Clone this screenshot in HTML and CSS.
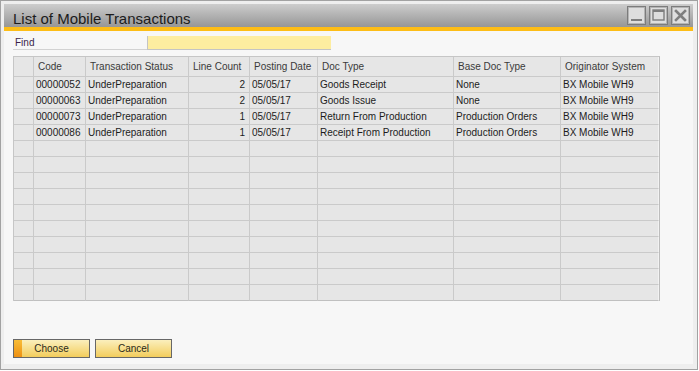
FILE: index.html
```html
<!DOCTYPE html>
<html>
<head>
<meta charset="utf-8">
<link rel="stylesheet" href="styles.css">
</head>
<body>
<div class="window">
  <div class="titlebar">
    <span class="title">List of Mobile Transactions</span>
    <div class="controls">
      <span class="ctl"><svg width="17" height="17" viewBox="0 0 17 17"><rect x="3" y="12" width="11" height="2" fill="#7e7e7e"/></svg></span>
      <span class="ctl"><svg width="17" height="17" viewBox="0 0 17 17"><rect x="3" y="3" width="11" height="10" fill="none" stroke="#7e7e7e" stroke-width="1.4"/><rect x="3" y="3" width="11" height="2" fill="#7e7e7e"/></svg></span>
      <span class="ctl"><svg width="17" height="17" viewBox="0 0 17 17"><path d="M4 4 L13 13 M13 4 L4 13" stroke="#7e7e7e" stroke-width="2.6" stroke-linecap="square"/></svg></span>
    </div>
  </div>
  <div class="content">
    <div class="find-row">
      <span class="find-label">Find</span>
      <span class="find-input"></span>
    </div>
    <table class="grid">
      <thead>
        <tr>
          <th class="c0"></th>
          <th class="c1">Code</th>
          <th class="c2">Transaction Status</th>
          <th class="c3">Line Count</th>
          <th class="c4">Posting Date</th>
          <th class="c5">Doc Type</th>
          <th class="c6">Base Doc Type</th>
          <th class="c7">Originator System</th>
        </tr>
      </thead>
      <tbody>
        <tr><td></td><td>00000052</td><td>UnderPreparation</td><td class="num">2</td><td>05/05/17</td><td>Goods Receipt</td><td>None</td><td>BX Mobile WH9</td></tr>
        <tr><td></td><td>00000063</td><td>UnderPreparation</td><td class="num">2</td><td>05/05/17</td><td>Goods Issue</td><td>None</td><td>BX Mobile WH9</td></tr>
        <tr><td></td><td>00000073</td><td>UnderPreparation</td><td class="num">1</td><td>05/05/17</td><td>Return From Production</td><td>Production Orders</td><td>BX Mobile WH9</td></tr>
        <tr><td></td><td>00000086</td><td>UnderPreparation</td><td class="num">1</td><td>05/05/17</td><td>Receipt From Production</td><td>Production Orders</td><td>BX Mobile WH9</td></tr>
        <tr><td></td><td></td><td></td><td></td><td></td><td></td><td></td><td></td></tr>
        <tr><td></td><td></td><td></td><td></td><td></td><td></td><td></td><td></td></tr>
        <tr><td></td><td></td><td></td><td></td><td></td><td></td><td></td><td></td></tr>
        <tr><td></td><td></td><td></td><td></td><td></td><td></td><td></td><td></td></tr>
        <tr><td></td><td></td><td></td><td></td><td></td><td></td><td></td><td></td></tr>
        <tr><td></td><td></td><td></td><td></td><td></td><td></td><td></td><td></td></tr>
        <tr><td></td><td></td><td></td><td></td><td></td><td></td><td></td><td></td></tr>
        <tr><td></td><td></td><td></td><td></td><td></td><td></td><td></td><td></td></tr>
        <tr><td></td><td></td><td></td><td></td><td></td><td></td><td></td><td></td></tr>
        <tr><td></td><td></td><td></td><td></td><td></td><td></td><td></td><td></td></tr>
      </tbody>
    </table>
    <div class="buttons">
      <button class="btn primary"><span class="accent"></span><span class="label">Choose</span></button>
      <button class="btn"><span class="label">Cancel</span></button>
    </div>
  </div>
</div>
</body>
</html>
```

FILE: styles.css
```css
* { box-sizing: border-box; }
html, body { margin: 0; padding: 0; background: #ffffff; }
body { font-family: "Liberation Sans", Arial, sans-serif; }

.window {
  width: 698px;
  height: 370px;
  border: 1px solid #a2a2a2;
  background: #eeeeee;
  padding: 3px 4px 5px 3px;
  display: flex;
  flex-direction: column;
}

.titlebar {
  height: 27px;
  flex: none;
  background: linear-gradient(#cdcdcd, #969696);
  border-bottom: 4px solid #fdbd16;
  display: flex;
  align-items: flex-start;
  justify-content: space-between;
}
.title {
  font-size: 15px;
  color: #1c1c1c;
  margin: 6px 0 0 9px;
  line-height: 17px;
}
.controls {
  display: flex;
  gap: 3px;
  margin: 2px 3px 0 0;
}
.ctl {
  width: 19px;
  height: 19px;
  border: 1px solid #7c7c7c;
  box-shadow: inset 0 0 0 1px #b4b4b4;
  background: #dedede;
  display: flex;
  align-items: center;
  justify-content: center;
}
.ctl svg { display: block; }

.content {
  flex: 1;
  background: #f7f7f7;
  padding: 5px 0 0 9px;
}

.find-row {
  display: flex;
  height: 14px;
}
.find-label {
  width: 134px;
  border-bottom: 1px solid #d2d2d2;
  font-size: 10px;
  line-height: 13px;
  padding-left: 2px;
  color: #3a1f4a;
}
.find-input {
  width: 184px;
  height: 14px;
  background: #fdeda0;
  border-left: 1px solid #c4c4c4;
  border-bottom: 1px solid #c4c4c4;
}

.grid {
  margin-top: 6px;
  border-collapse: separate;
  border-spacing: 0;
  table-layout: fixed;
  width: 647px;
  border-top: 1px solid #c6c6c6;
  border-left: 1px solid #c6c6c6;
  border-right: 1px solid #bdbdbd;
  font-size: 10px;
}
.grid th, .grid td {
  background: #e6e6e6;
  border-right: 1px solid #cacaca;
  border-bottom: 1px solid #cacaca;
  white-space: nowrap;
  overflow: hidden;
  text-align: left;
  padding: 0 0 0 2px;
}
.grid th:last-child, .grid td:last-child { border-right-color: #f2f2f2; }
.grid tbody tr:last-child td { border-bottom-color: #c0c0c0; }
.grid th {
  height: 20px;
  font-weight: normal;
  color: #3a3a3a;
  padding-left: 4px;
}
.grid td {
  height: 16px;
  color: #1c1c1c;
  line-height: 12px;
}
.grid td.num { text-align: right; padding-right: 4px; }
.c0 { width: 20px; }
.c1 { width: 52px; }
.c2 { width: 103px; }
.c3 { width: 61px; }
.c4 { width: 68px; }
.c5 { width: 136px; }
.c6 { width: 107px; }
.c7 { width: 98px; }

.buttons {
  display: flex;
  gap: 5px;
  margin-top: 38px;
}
.btn {
  position: relative;
  width: 77px;
  height: 19px;
  padding: 0;
  border: 1px solid #676767;
  background: linear-gradient(#fbefbd, #f3cd5c);
  font-family: "Liberation Sans", Arial, sans-serif;
  font-size: 10px;
  color: #2a2a1a;
  display: flex;
  align-items: center;
  justify-content: center;
}
.btn .accent {
  position: absolute;
  left: 0;
  top: 0;
  bottom: 0;
  width: 8px;
  background: linear-gradient(#f8bd38, #ee9012);
}
.btn .label { position: relative; }
```
